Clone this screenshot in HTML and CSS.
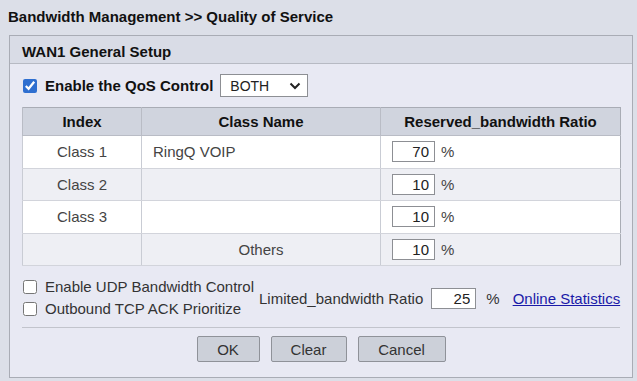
FILE: index.html
```html
<!DOCTYPE html>
<html lang="en">
<head>
    <meta charset="UTF-8">
    <meta name="viewport" content="width=device-width, initial-scale=1.0">
    <title>Quality of Service</title>
    <link rel="stylesheet" href="styles.css">
</head>
<body>
    <h1 class="page-title">Bandwidth Management &gt;&gt; Quality of Service</h1>

    <form class="panel" name="qos_form" id="qos_form">
        <div class="panel-head">WAN1 General Setup</div>
        <div class="panel-body">
            <div class="qos-row">
                <label class="chk bold"><input type="checkbox" name="qos_enable" checked />Enable the QoS Control</label>
                <div class="select-wrap">
                    <select name="qos_dir" class="select">
                        <option>BOTH</option>
                        <option>UPSTREAM</option>
                        <option>DOWNSTREAM</option>
                    </select>
                    <svg class="chevron" width="12" height="8" viewBox="0 0 12 8"><path d="M1.5 1.5 L6 6 L10.5 1.5" fill="none" stroke="#222" stroke-width="2"/></svg>
                </div>
            </div>

            <table class="qos-table">
                <thead>
                    <tr>
                        <th class="col-index">Index</th>
                        <th class="col-name">Class Name</th>
                        <th class="col-ratio">Reserved_bandwidth Ratio</th>
                    </tr>
                </thead>
                <tbody>
                    <tr>
                        <td class="text-center">Class 1</td>
                        <td>RingQ VOIP</td>
                        <td><div class="ratio-cell"><input type="text" class="ratio" value="70" /><span>%</span></div></td>
                    </tr>
                    <tr>
                        <td class="text-center">Class 2</td>
                        <td></td>
                        <td><div class="ratio-cell"><input type="text" class="ratio" value="10" /><span>%</span></div></td>
                    </tr>
                    <tr>
                        <td class="text-center">Class 3</td>
                        <td></td>
                        <td><div class="ratio-cell"><input type="text" class="ratio" value="10" /><span>%</span></div></td>
                    </tr>
                    <tr>
                        <td></td>
                        <td class="text-center">Others</td>
                        <td><div class="ratio-cell"><input type="text" class="ratio" value="10" /><span>%</span></div></td>
                    </tr>
                </tbody>
            </table>

            <div class="extra-row">
                <div class="extra-checks">
                    <label class="chk"><input type="checkbox" name="udp_ctrl" />Enable UDP Bandwidth Control</label>
                    <label class="chk"><input type="checkbox" name="tcp_ack" />Outbound TCP ACK Prioritize</label>
                </div>
                <div class="limit">
                    <span>Limited_bandwidth Ratio</span>
                    <input type="text" class="ratio ratio-limit" value="25" />
                    <span class="pct">%</span>
                    <a href="#" class="stats-link">Online Statistics</a>
                </div>
            </div>

            <div class="actions">
                <button type="submit" class="btn btn-ok">OK</button>
                <button type="reset" class="btn btn-clear">Clear</button>
                <button type="button" class="btn btn-cancel">Cancel</button>
            </div>
        </div>
    </form>
</body>
</html>
```

FILE: styles.css
```css
body {
    margin: 0;
    background: #dcdfe8;
    font-family: "Liberation Sans", Arial, sans-serif;
    font-size: 15px;
    color: #333;
    white-space: nowrap;
}

.page-title {
    margin: 0;
    padding: 8px 0 0 8px;
    height: 27px;
    font-size: 15px;
    font-weight: bold;
    color: #111;
}

.panel {
    margin: 0 4px 0 9px;
    border: 1px solid #a9acb5;
    background: #e8e9f3;
}

.panel-head {
    height: 27px;
    line-height: 31px;
    padding-left: 12px;
    background: #d9dce6;
    border-bottom: 1px solid #b7bac3;
    font-weight: bold;
    font-size: 15px;
    color: #111;
}

.panel-body {
    padding: 10px 12px 15px 12px;
}

.qos-row {
    display: flex;
    align-items: center;
    height: 23px;
}

.bold {
    font-weight: bold;
    color: #111;
}

.chk {
    display: flex;
    align-items: center;
}

.chk input {
    width: 14px;
    height: 14px;
    margin: 0 8px 0 1px;
    accent-color: #2f6fd0;
}

.select-wrap {
    position: relative;
    margin-left: 7px;
}

.select {
    appearance: none;
    width: 88px;
    height: 23px;
    padding: 0 0 0 9px;
    border: 1px solid #8d8f94;
    background: #fff;
    font-family: inherit;
    font-size: 14px;
    color: #222;
}

.chevron {
    position: absolute;
    right: 7px;
    top: 8px;
    pointer-events: none;
}

.qos-table {
    width: 598px;
    table-layout: fixed;
    margin-top: 10px;
    border-collapse: collapse;
    border: 1px solid #a9acb5;
}

.qos-table th,
.qos-table td {
    box-sizing: border-box;
}

.qos-table th {
    height: 28px;
    padding: 0;
    background: #d0d4de;
    font-weight: bold;
    color: #111;
    border-left: 1px solid #b9bcc5;
    border-bottom: 1px solid #b9bcc5;
}

.qos-table td {
    height: 32.5px;
    padding: 0 0 0 11px;
    border-left: 1px solid #c9ccd4;
    border-bottom: 1px solid #d2d4db;
    color: #444;
}

.qos-table td.text-center {
    text-align: center;
    padding-left: 0;
}

.qos-table tbody tr:nth-child(odd) {
    background: #fff;
}

.qos-table tbody tr:nth-child(even) {
    background: #eeeff4;
}

.col-index {
    width: 119px;
}

.col-name {
    width: 239px;
}

.col-ratio {
    width: 240px;
}

.ratio-cell {
    display: flex;
    align-items: center;
    gap: 6px;
}

.ratio {
    width: 43px;
    height: 21px;
    box-sizing: border-box;
    padding: 0 5px 0 0;
    border: 1px solid #8d8f94;
    text-align: right;
    font-family: inherit;
    font-size: 15px;
    color: #222;
    margin: 0;
}

.extra-row {
    display: flex;
    align-items: center;
    height: 61px;
    border-bottom: 1px solid #c2c4cc;
}

.extra-checks {
    display: flex;
    flex-direction: column;
    gap: 5px;
    padding-top: 2px;
}

.limit {
    display: flex;
    align-items: center;
    margin-left: 5px;
    padding-top: 4px;
    color: #333;
}

.ratio-limit {
    width: 45px;
    margin-left: 8px;
}

.pct {
    margin-left: 10px;
}

.stats-link {
    margin-left: 13px;
    color: #1a1aa8;
}

.actions {
    display: flex;
    justify-content: center;
    gap: 11px;
    padding: 8px 0 0 0;
}

.btn {
    height: 26px;
    border: 1px solid #8f9299;
    border-radius: 2px;
    background: #ccd0d9;
    font-family: inherit;
    font-size: 15px;
    color: #333;
}

.btn-ok {
    width: 63px;
}

.btn-clear {
    width: 76px;
}

.btn-cancel {
    width: 88px;
}
```
